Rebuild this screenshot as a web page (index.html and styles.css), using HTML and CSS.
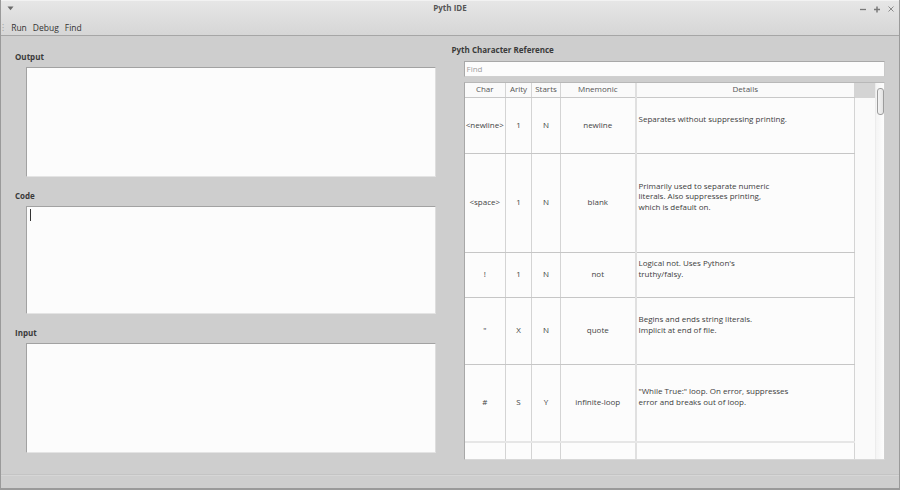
FILE: index.html
```html
<!DOCTYPE html>
<html>
<head>
<meta charset="utf-8">
<link rel="stylesheet" href="styles.css">
</head>
<body>
<div class="window">
  <div class="chrome">
    <div class="titlebar">
      <svg class="wmenu" width="7" height="5" viewBox="0 0 7 5"><path d="M0.5 0.5 L6.5 0.5 L3.5 4.2 Z" fill="#6a6a6a"/></svg>
      <div class="title">Pyth IDE</div>
      <div class="controls">
        <svg width="8" height="8" viewBox="0 0 8 8"><path d="M1 4.5 H7" stroke="#7a7a7a" stroke-width="1.3"/></svg>
        <svg width="8" height="8" viewBox="0 0 8 8"><path d="M1 4.5 H7 M4 1.5 V7.5" stroke="#7a7a7a" stroke-width="1.5"/></svg>
        <svg width="8" height="8" viewBox="0 0 8 8"><path d="M1.5 1.5 L6.5 6.5 M6.5 1.5 L1.5 6.5" stroke="#8a8a8a" stroke-width="1"/></svg>
      </div>
    </div>
    <div class="menubar">
      <span class="grip">⁝</span>
      <span class="menuitem">Run</span>
      <span class="menuitem">Debug</span>
      <span class="menuitem">Find</span>
    </div>
  </div>
  <div class="main">
    <div class="left">
      <div class="section">
        <div class="label">Output</div>
        <div class="box box-output"></div>
      </div>
      <div class="section">
        <div class="label">Code</div>
        <div class="box box-code"><span class="caret"></span></div>
      </div>
      <div class="section">
        <div class="label">Input</div>
        <div class="box box-input"></div>
      </div>
    </div>
    <div class="right">
      <div class="label rlabel">Pyth Character Reference</div>
      <div class="find">Find</div>
      <div class="tableframe">
        <table class="grid">
          <colgroup>
            <col class="c-char"><col class="c-arity"><col class="c-starts"><col class="c-mnem"><col class="c-details">
          </colgroup>
          <thead>
            <tr class="hdr"><th>Char</th><th>Arity</th><th>Starts</th><th>Mnemonic</th><th class="dcol">Details</th></tr>
          </thead>
          <tbody>
            <tr class="r1"><td>&lt;newline&gt;</td><td>1</td><td>N</td><td>newline</td><td class="det dcol">Separates without suppressing printing.</td></tr>
            <tr class="r2"><td>&lt;space&gt;</td><td>1</td><td>N</td><td>blank</td><td class="det dcol">Primarily used to separate numeric<br>literals. Also suppresses printing,<br>which is default on.</td></tr>
            <tr class="r3"><td>!</td><td>1</td><td>N</td><td>not</td><td class="det dcol">Logical not. Uses Python's<br>truthy/falsy.</td></tr>
            <tr class="r4"><td>"</td><td>X</td><td>N</td><td>quote</td><td class="det dcol">Begins and ends string literals.<br>Implicit at end of file.</td></tr>
            <tr class="r5"><td>#</td><td>S</td><td>Y</td><td>infinite-loop</td><td class="det dcol">"While True:" loop. On error, suppresses<br>error and breaks out of loop.</td></tr>
            <tr class="r6"><td></td><td></td><td></td><td></td><td class="dcol"></td></tr>
          </tbody>
        </table>
        <div class="filler"><div class="filler-hdr"></div></div>
        <div class="scrollbar"><div class="thumb"></div></div>
      </div>
    </div>
  </div>
  <div class="statusbar"></div>
</div>
</body>
</html>
```

FILE: styles.css
```css
* { box-sizing: border-box; }
html, body { margin: 0; padding: 0; }
body {
  width: 900px;
  height: 490px;
  font-family: "Open Sans", "Noto Sans", sans-serif;
  color: #3a3a3a;
  background: #cecece;
  overflow: hidden;
}
.window {
  width: 900px;
  height: 490px;
  display: flex;
  flex-direction: column;
  background: #cecece;
  border-left: 1px solid #9a9a9a;
  border-right: 1px solid #9a9a9a;
  border-bottom: 2px solid #9a9a9a;
}
.chrome {
  height: 36px;
  background: linear-gradient(#e6e6e6, #d6d6d6);
  border-top: 1px solid #f2f2f2;
  border-bottom: 1px solid #a6a6a6;
  display: flex;
  flex-direction: column;
}
.titlebar {
  height: 19px;
  display: flex;
  align-items: center;
  position: relative;
}
.wmenu { margin-left: 6px; margin-top: -4px; }
.title {
  position: absolute;
  left: 0; right: 0;
  top: 1px;
  text-align: center;
  font-size: 8px;
  font-weight: bold;
  color: #555;
  line-height: 12px;
}
.controls {
  margin-left: auto;
  margin-right: 4px;
  margin-top: -3px;
  display: flex;
  gap: 6px;
}
.menubar {
  height: 15px;
  display: flex;
  align-items: center;
  font-size: 8.5px;
  color: #333;
}
.grip { color: #999; font-size: 8px; margin-left: 1px; margin-right: 7px; }
.menuitem { margin-right: 6px; }
.main {
  flex: 1;
  display: flex;
  border-bottom: 1px solid #c4c4c4;
}
.left {
  width: 439px;
  padding: 14px 0 0 14px;
  display: flex;
  flex-direction: column;
  gap: 12px;
}
.label {
  font-size: 8px;
  font-weight: bold;
  color: #3a3a3a;
  height: 13px;
  line-height: 13px;
  margin-bottom: 4px;
}
.box {
  margin-left: 11px;
  width: 410px;
  background: #fcfcfc;
  border-top: 1px solid #a2a2a2;
  border-left: 1px solid #a2a2a2;
  border-right: 1px solid #dedede;
  border-bottom: 1px solid #e4e4e4;
}
.box-output { height: 110px; }
.box-code { height: 108px; padding: 2px 0 0 3px; }
.box-input { height: 110px; }
.caret {
  display: block;
  width: 1px;
  height: 12px;
  background: #333;
}
.right {
  flex: 1;
  padding: 7px 14px 0 12px;
  display: flex;
  flex-direction: column;
}
.rlabel { margin-bottom: 5px; }
.find {
  margin-left: 12px;
  height: 16px;
  background: #fcfcfc;
  border: 1px solid #a8a8a8;
  border-right-color: #c8c8c8;
  border-bottom-color: #d0d0d0;
  font-size: 8px;
  color: #a0a0a0;
  line-height: 14px;
  padding-left: 2px;
  margin-bottom: 5px;
}
.tableframe {
  margin-left: 12px;
  height: 378px;
  display: flex;
  background: #fbfbfb;
  border-top: 1px solid #b8b8b8;
  border-left: 1px solid #a8a8a8;
  border-right: 1px solid #d0d0d0;
  border-bottom: 1px solid #d8d8d8;
  overflow: hidden;
}
.grid {
  width: 390px;
  table-layout: fixed;
  border-collapse: collapse;
  font-size: 8px;
  color: #444;
  background: #fcfcfc;
  align-self: flex-start;
}
.c-char { width: 41px; }
.c-arity { width: 26px; }
.c-starts { width: 29px; }
.c-mnem { width: 75px; }
.c-details { width: 219px; }
.grid th, .grid td {
  border-right: 1px solid #d4d4d4;
  border-bottom: 1px solid #c6c6c6;
  text-align: center;
  vertical-align: middle;
  padding: 0;
  white-space: nowrap;
  overflow: hidden;
}
.grid th {
  font-weight: normal;
  color: #555;
  height: 14px;
  line-height: 12px;
  padding-bottom: 1px;
  background: #fafafa;
  border-bottom: 1px solid #c8c8c8;
}
.grid td.dcol, .grid th.dcol { border-left: 2px solid #e0e0e0; }
.grid td {
  padding-bottom: 2px;
}
.grid td.det {
  text-align: left;
  padding: 0 0 12px 2px;
  line-height: 10.5px;
  color: #3c3c3c;
}
.r1 td { height: 56px; }
.r2 td { height: 99px; }
.r3 td { height: 45px; }
.r4 td { height: 67px; }
.r5 td { height: 78px; border-bottom: 2px solid #e6e6e6; }
.r6 td { height: 30px; border-bottom: none; }
.filler {
  width: 20px;
  background: #fafafa;
}
.filler-hdr {
  height: 15px;
  background: #d4d4d4;
}
.scrollbar {
  width: 9px;
  background: linear-gradient(90deg, #f4f4f4, #fdfdfd);
  border-left: 1px solid #ececec;
  padding: 5px 1px 0 1px;
}
.thumb {
  height: 27px;
  width: 7px;
  border: 1px solid #9c9c9c;
  border-radius: 3px;
  background: linear-gradient(90deg, #f4f4f4, #e2e2e2);
}
.statusbar {
  height: 13px;
  border-top: 1px solid #d6d6d6;
  background: #cecece;
}
```
